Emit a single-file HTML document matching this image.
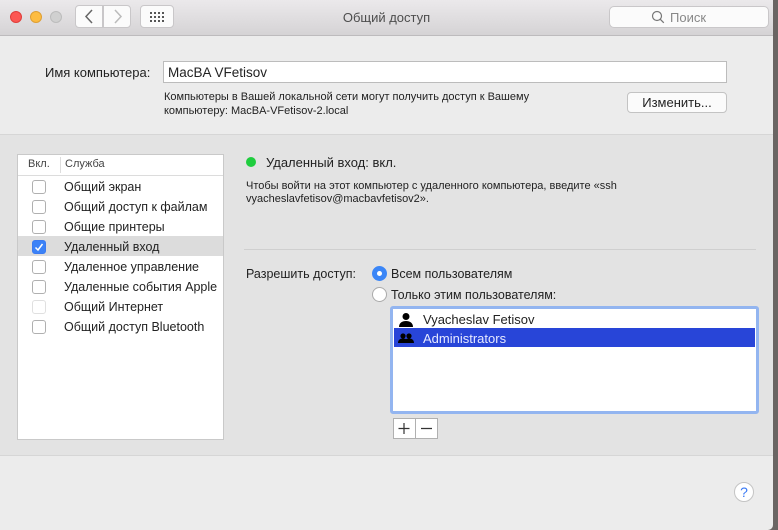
<!DOCTYPE html>
<html><head><meta charset="utf-8"><style>
*{box-sizing:border-box;margin:0;padding:0}
body{width:778px;height:530px;background:#6a6563;font-family:"Liberation Sans","DejaVu Sans",sans-serif;font-size:13px;color:#222;position:relative;overflow:hidden}
.win{position:absolute;left:0;top:0;width:773px;height:530px;background:#ececec;border-bottom-right-radius:5px;overflow:hidden}
.tb{position:absolute;left:0;top:0;right:0;height:36px;background:linear-gradient(#ebe9eb,#d5d3d5);border-bottom:1px solid #bdbbbd}
.dot{position:absolute;top:11px;width:12px;height:12px;border-radius:50%}
.btn{position:absolute;background:#fbfbfb;border:1px solid #c9c7c9;border-radius:4px}
.abs{position:absolute;white-space:nowrap}
.mid{position:absolute;left:0;right:0;top:134px;height:322px;background:#e3e3e3;border-top:1px solid #d6d6d6;border-bottom:1px solid #d6d6d6}
.cb{position:absolute;left:32px;width:14px;height:14px;border:1px solid #b0b0b0;border-radius:3px;background:#fff}
.row{position:absolute;left:64px;font-size:12.5px}
</style></head><body>
<div class="win">
<div class="tb">
<div class="dot" style="left:10px;background:#fc5753;border:1px solid #df3e3a"></div>
<div class="dot" style="left:30px;background:#fdbc40;border:1px solid #de9f34"></div>
<div class="dot" style="left:50px;background:#d0d0d0;border:1px solid #bcbcbc"></div>
<div class="btn" style="left:75px;top:5px;width:28px;height:23px;border-radius:4px 0 0 4px"></div>
<div class="btn" style="left:103px;top:5px;width:28px;height:23px;border-radius:0 4px 4px 0"></div>
<svg class="abs" style="left:75px;top:5px" width="56" height="23"><path d="M17 5l-6 6.5 6 6.5" stroke="#666" stroke-width="1.5" fill="none"/><path d="M40 5l6 6.5-6 6.5" stroke="#bbb" stroke-width="1.5" fill="none"/></svg>
<div class="btn" style="left:140px;top:5px;width:34px;height:23px"></div>
<svg class="abs" style="left:149px;top:11px" width="16" height="12" fill="#555"><g><rect x="1" y="1" width="2" height="2"/><rect x="5" y="1" width="2" height="2"/><rect x="9" y="1" width="2" height="2"/><rect x="13" y="1" width="2" height="2"/><rect x="1" y="5" width="2" height="2"/><rect x="5" y="5" width="2" height="2"/><rect x="9" y="5" width="2" height="2"/><rect x="13" y="5" width="2" height="2"/><rect x="1" y="9" width="2" height="2"/><rect x="5" y="9" width="2" height="2"/><rect x="9" y="9" width="2" height="2"/><rect x="13" y="9" width="2" height="2"/></g></svg>
<div class="abs" style="left:0;right:0;top:10px;text-align:center;color:#4d4d4d;font-size:13px">Общий доступ</div>
<div class="btn" style="left:609px;top:6px;width:160px;height:22px;border-radius:5px"></div>
<svg class="abs" style="left:651px;top:10px" width="14" height="14"><circle cx="6" cy="6" r="4.5" stroke="#777" stroke-width="1.2" fill="none"/><path d="M9.3 9.3l3.5 3.5" stroke="#777" stroke-width="1.3"/></svg>
<div class="abs" style="left:670px;top:10px;color:#888">Поиск</div>
</div>

<div class="abs" style="left:45px;top:65px">Имя компьютера:</div>
<div class="abs" style="left:163px;top:61px;width:564px;height:22px;background:#fff;border:1px solid #bcbcbc;padding:3px 4px;font-size:13.5px">MacBA VFetisov</div>
<div class="abs" style="left:164px;top:90px;font-size:11px;line-height:14px">Компьютеры в Вашей локальной сети могут получить доступ к Вашему<br>компьютеру: MacBA-VFetisov-2.local</div>
<div class="btn" style="left:627px;top:92px;width:100px;height:21px;text-align:center;line-height:19px;font-size:13px;border-color:#c3c3c3">Изменить...</div>

<div class="mid">
<div class="abs" style="left:17px;top:19px;width:207px;height:286px;background:#fff;border:1px solid #c9c9c9"></div>
<div class="abs" style="left:18px;top:20px;width:205px;height:21px;border-bottom:1px solid #dcdcdc"></div>
<div class="abs" style="left:60px;top:22px;width:1px;height:16px;background:#ddd"></div>
<div class="abs" style="left:28px;top:23px;font-size:11px;color:#444">Вкл.</div>
<div class="abs" style="left:65px;top:23px;font-size:11px;color:#444">Служба</div>
<div class="abs" style="left:18px;top:101px;width:205px;height:20px;background:#dcdcdc"></div>
<div class="cb" style="top:45px"></div><div class="row" style="top:45px">Общий экран</div>
<div class="cb" style="top:65px"></div><div class="row" style="top:65px">Общий доступ к файлам</div>
<div class="cb" style="top:85px"></div><div class="row" style="top:85px">Общие принтеры</div>
<div class="cb" style="top:105px;background:#3b82f7;border-color:#3b7af0"></div>
<svg class="abs" style="left:32px;top:105px" width="14" height="14"><path d="M3.5 7.5l2.5 2.5 4.5-6" stroke="#fff" stroke-width="1.5" fill="none"/></svg>
<div class="row" style="top:105px">Удаленный вход</div>
<div class="cb" style="top:125px"></div><div class="row" style="top:125px">Удаленное управление</div>
<div class="cb" style="top:145px"></div><div class="row" style="top:145px">Удаленные события Apple</div>
<div class="cb" style="top:165px;border-color:#e0e0e0"></div><div class="row" style="top:165px">Общий Интернет</div>
<div class="cb" style="top:185px"></div><div class="row" style="top:185px">Общий доступ Bluetooth</div>

<div class="abs" style="left:246px;top:22px;width:10px;height:10px;border-radius:50%;background:#1fcd3e"></div>
<div class="abs" style="left:266px;top:20px;font-size:13px">Удаленный вход: вкл.</div>
<div class="abs" style="left:246px;top:45px;font-size:11px;line-height:13px">Чтобы войти на этот компьютер с удаленного компьютера, введите «ssh<br>vyacheslavfetisov@macbavfetisov2».</div>
<div class="abs" style="left:244px;top:114px;width:512px;height:1px;background:#cfcfcf"></div>
<div class="abs" style="left:246px;top:132px;font-size:12.5px">Разрешить доступ:</div>
<div class="abs" style="left:372px;top:131px;width:15px;height:15px;border-radius:50%;background:#3b86f7"></div>
<div class="abs" style="left:377px;top:136px;width:5px;height:5px;border-radius:50%;background:#fff"></div>
<div class="abs" style="left:391px;top:132px;font-size:12.5px">Всем пользователям</div>
<div class="abs" style="left:372px;top:152px;width:15px;height:15px;border-radius:50%;background:#fff;border:1px solid #aaa"></div>
<div class="abs" style="left:391px;top:153px;font-size:12.5px">Только этим пользователям:</div>
<div class="abs" style="left:390px;top:171px;width:369px;height:108px;border:3px solid #93b5f0;border-radius:3px;background:#fff"></div>
<div class="abs" style="left:394px;top:193px;width:361px;height:19px;background:#2845d8"></div>
<svg class="abs" style="left:398px;top:177px" width="16" height="16"><circle cx="8" cy="4.5" r="3.5"/><path d="M1 15c0-4 3-6 7-6s7 2 7 6z"/></svg>
<div class="abs" style="left:423px;top:177px;font-size:13px">Vyacheslav Fetisov</div>
<svg class="abs" style="left:398px;top:197px" width="16" height="12"><circle cx="5" cy="4" r="2.6"/><circle cx="11" cy="4" r="2.6"/><path d="M0 11c0-3 2-4.5 5-4.5s5 1.5 5 4.5zM6 11c0-3 2-4.5 5-4.5s5 1.5 5 4.5z"/></svg>
<div class="abs" style="left:423px;top:196px;font-size:13px;color:#e6e9ff">Administrators</div>
<div class="abs" style="left:393px;top:283px;width:45px;height:21px;border:1px solid #b0b0b0;background:#fff"></div>
<div class="abs" style="left:415px;top:283px;width:1px;height:21px;background:#b0b0b0"></div>
<svg class="abs" style="left:393px;top:283px" width="45" height="21"><path d="M11 5v11M5.5 10.5h11M28 10.5h11" stroke="#333" stroke-width="1.2"/></svg>
</div>

<div class="abs" style="left:734px;top:482px;width:20px;height:20px;border-radius:50%;background:#fff;border:1px solid #c4c4c4;text-align:center;color:#3a7af5;font-size:14px;line-height:19px">?</div>
</div>
</body></html>
